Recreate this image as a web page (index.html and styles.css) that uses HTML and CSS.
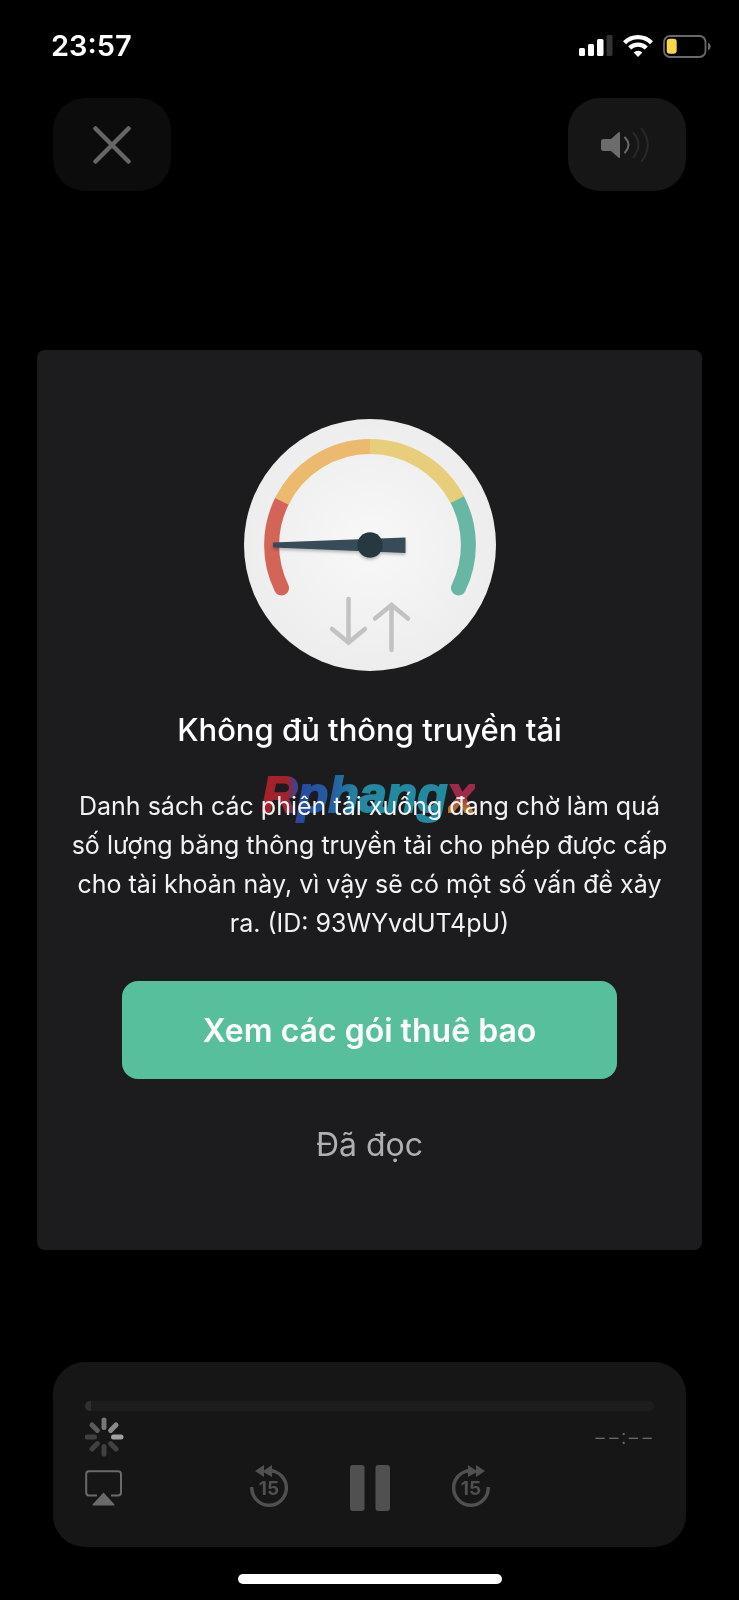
FILE: index.html
```html
<!DOCTYPE html>
<html lang="vi">
<head>
<meta charset="utf-8">
<meta name="viewport" content="width=device-width, initial-scale=1">
<title>Không đủ thông truyền tải</title>
<link rel="stylesheet" href="styles.css">
</head>
<body>
<header class="status">
  <time class="clock">23:57</time>
  <div class="status-icons">
    <svg width="34" height="22" viewBox="0 0 34 22" aria-hidden="true">
      <g fill="#fff"><rect x="0" y="13" width="6" height="8" rx="1.5"/><rect x="9" y="9" width="6" height="12" rx="1.5"/><rect x="18" y="4" width="6.5" height="17" rx="1.5"/></g>
      <rect x="27.500" y="0" width="6" height="21" rx="1.5" fill="#333"/>
    </svg>
    <svg width="30" height="22" viewBox="0 0 30 22" aria-hidden="true" fill="none" stroke="#fff" stroke-width="4.300">
      <path d="M1.500 7.800A19 19 0 0 1 28.500 7.800"/>
      <path d="M6.700 13A11.700 11.700 0 0 1 23.300 13"/>
      <path d="M15 22L10.600 17.600A6.300 6.300 0 0 1 19.400 17.600Z" fill="#fff" stroke="none"/>
    </svg>
    <svg width="48" height="23" viewBox="0 0 48 23" aria-hidden="true">
      <rect x="1" y="1" width="41.500" height="21" rx="6" fill="none" stroke="#6a6a6a" stroke-width="1.800"/>
      <rect x="3.700" y="3.700" width="10" height="15" rx="3" fill="#f8d64a"/>
      <path d="M45 7.500Q47.700 9 47.700 11.500T45 15.500Z" fill="#6a6a6a"/>
    </svg>
  </div>
</header>

<nav class="top-controls">
  <button class="pill pill-close" type="button" aria-label="Đóng">
    <svg width="38" height="38" viewBox="0 0 38 38" fill="none" stroke="#666" stroke-width="4.500" stroke-linecap="round"><path d="M2.500 2.500L35.500 35.500M35.500 2.500L2.500 35.500"/></svg>
  </button>
  <button class="pill" type="button" aria-label="Âm lượng">
    <svg width="54" height="38" viewBox="0 0 54 38" fill="none" stroke-linecap="round" stroke-width="2">
      <path d="M3.500 13H11L18.600 6.300Q20 5.300 20 7V31Q20 32.700 18.600 31.700L11 25H3.500Q1 25 1 22.500V15.500Q1 13 3.500 13Z" fill="#6c6c6c"/>
      <path d="M25 11.500Q32 19 25 26.500" stroke="#696969"/>
      <path d="M33.500 7Q43.500 19 33.500 31" stroke="#292929"/>
      <path d="M41.500 2.500Q54 19 41.500 35.500" stroke="#292929"/>
    </svg>
  </button>
</nav>

<main class="card">
  <svg class="gauge" width="252" height="252" viewBox="0 0 252 252" aria-hidden="true">
    <defs>
      <radialGradient id="dial"><stop offset="0" stop-color="#f8f8f8"/><stop offset="1" stop-color="#ededed"/></radialGradient>
      <filter id="shade" x="-20%" y="-50%" width="140%" height="220%"><feDropShadow dx="0" dy="2" stdDeviation="1.500" flood-opacity=".25"/></filter>
    </defs>
    <circle cx="126" cy="126" r="126" fill="url(#dial)"/>
    <g fill="none" stroke-width="15">
      <path d="M37.500 169A98.400 98.400 0 0 1 37.800 82.400" stroke="#d26558" stroke-linecap="round"/>
      <path d="M214.500 169A98.400 98.400 0 0 0 213.300 80.600" stroke="#6ab6a5" stroke-linecap="round"/>
      <path d="M37.800 82.400A98.400 98.400 0 0 1 126 27.600" stroke="#ebba6f"/>
      <path d="M126 27.600A98.400 98.400 0 0 1 213.300 80.600" stroke="#e8ce7a"/>
    </g>
    <g filter="url(#shade)">
      <path d="M29 123.500L161.500 118.500V134L29 128.500Z" fill="#384b59"/>
      <circle cx="126" cy="126" r="12.700" fill="#273741"/>
    </g>
    <g fill="none" stroke="#c2c2c2" stroke-width="4.500" stroke-linecap="round">
      <path d="M104.500 180V222.500M88 210L104.500 223.500L121 210M147.500 231V186M131 199.500L147.500 186L164 199.500"/>
    </g>
  </svg>
  <h1 class="title">Không đủ thông truyền tải</h1>
  <div class="message">
    <span class="watermark" aria-hidden="true"><span class="wm-main">Rphang</span><span class="wm-x">x</span></span>
    <p class="message-text">Danh sách các phiên tải xuống đang chờ làm quá số lượng băng thông truyền tải cho phép được cấp cho tài khoản này, vì vậy sẽ có một số vấn đề xảy ra. (ID: 93WYvdUT4pU)</p>
  </div>
  <button class="primary" type="button">Xem các gói thuê bao</button>
  <button class="dismiss" type="button">Đã đọc</button>
</main>

<section class="player" aria-label="Trình phát">
  <input class="seek" type="range" min="0" max="100" value="0" aria-label="Tiến trình">
  <div class="time-row">
    <svg width="40" height="40" viewBox="-19 -20 40 40" fill="none" stroke-width="5" stroke-linecap="round" aria-hidden="true">
      <path d="M0 -9.500V-17" stroke="#777"/>
      <path d="M6.600 -6.600L12 -12" stroke="#8a8a8a"/>
      <path d="M9.500 0H17" stroke="#a0a0a0"/>
      <path d="M6.600 6.600L12 12M0 9.500V17M-6.600 6.600L-12 12M-9.500 0H-17" stroke="#404040"/>
      <path d="M-6.600 -6.600L-12 -12" stroke="#5b5b5b"/>
    </svg>
    <span class="remaining">−−:−−</span>
  </div>
  <div class="controls">
    <button class="icon-btn airplay" type="button" aria-label="AirPlay">
      <svg width="38" height="36" viewBox="0 0 38 36"><path d="M12 25.500H4Q1.200 25.500 1.200 22.500V4Q1.200 1.200 4 1.200H33Q36 1.200 36 4V22.500Q36 25.500 33 25.500H26" fill="none" stroke="#6a6a6a" stroke-width="2"/><path d="M18.500 22.500L29.500 34.500Q29.500 35.500 28.500 35.500H8.500Q7.500 35.500 7.500 34.500Z" fill="#6a6a6a"/></svg>
    </button>
    <div class="transport">
      <button class="icon-btn" type="button" aria-label="Lùi 15 giây">
        <svg width="38" height="42" viewBox="0 0 38 42"><path d="M1.800 22A17.300 17.300 0 1 0 19 5.600" fill="none" stroke="#505050" stroke-width="3.400"/><path d="M5 6L14 0V5.500L22 0V4L26 5.500L22 8.500V12L14 7.500V12Z" fill="#505050"/><text class="skip-label" x="19" y="30">15</text></svg>
      </button>
      <button class="icon-btn" type="button" aria-label="Tạm dừng">
        <svg width="40" height="46" viewBox="0 0 40 46" fill="#505050"><rect width="14.500" height="46" rx="3"/><rect x="25.500" width="14.500" height="46" rx="3"/></svg>
      </button>
      <button class="icon-btn" type="button" aria-label="Tiến 15 giây">
        <svg width="38" height="42" viewBox="0 0 38 42"><path d="M36.200 22A17.300 17.300 0 1 1 19 5.600" fill="none" stroke="#505050" stroke-width="3.400"/><path d="M33 6L24 0V5.500L16 0V4L12 5.500L16 8.500V12L24 7.500V12Z" fill="#505050"/><text class="skip-label" x="19" y="30">15</text></svg>
      </button>
    </div>
  </div>
</section>
<div class="home-bar"></div>
</body>
</html>
```
FILE: styles.css
```css
* { box-sizing: border-box; }
body {
  margin: 0;
  min-height: 100vh;
  background: #000;
  color: #fff;
  font-family: Inter, "Noto Sans", sans-serif;
}
button {
  border: 0;
  padding: 0;
  background: none;
  color: inherit;
  font-family: inherit;
  cursor: pointer;
}
svg { display: block; }

.status {
  display: flex;
  justify-content: space-between;
  padding: 28px 28px 34px 51px;
}
.clock { font-size: 29px; line-height: 36px; font-weight: 600; }
.status-icons { display: flex; align-items: center; gap: 10px; }

.top-controls {
  display: flex;
  justify-content: space-between;
  padding: 0 53px;
}
.pill {
  display: flex;
  align-items: center;
  justify-content: center;
  width: 118px;
  height: 93px;
  border-radius: 32px;
  background: #161616;
}
.pill-close { background: #0c0c0c; }

.card {
  display: flex;
  flex-direction: column;
  align-items: center;
  margin: 159px 37px 0;
  padding: 69px 28px 85px;
  border-radius: 8px;
  background: #1c1c1e;
  text-align: center;
}
.title {
  margin: 39px 0 0;
  font-size: 31px;
  line-height: 40px;
  font-weight: 500;
}
.message { position: relative; margin-top: 37px; }
.message-text {
  margin: 0;
  color: #f2f2f2;
  font-size: 25px;
  line-height: 39px;
}
.watermark {
  position: absolute;
  top: -20px;
  left: 50%;
  margin-left: -108px;
  font: italic 700 50px/56px "Liberation Sans", Arial, sans-serif;
  opacity: .8;
  mix-blend-mode: screen;
  white-space: nowrap;
}
.wm-main, .wm-x {
  color: transparent;
  background-clip: text;
  -webkit-background-clip: text;
  -webkit-text-stroke: 2px transparent;
}
.wm-main { background-image: linear-gradient(90deg, #c00810 13%, #0d3fc0 20%, #0860b8 38%, #0898b8 52%, #0898b8); }
.wm-x { background-image: linear-gradient(#b8123c 50%, #d98c10 80%); }

.primary {
  width: 100%;
  max-width: 495px;
  height: 98px;
  margin-top: 38px;
  border-radius: 16px;
  background: #57bf9c;
  font-size: 32px;
  font-weight: 600;
}
.dismiss {
  margin-top: 46px;
  color: #b0b0b0;
  font-size: 32px;
  line-height: 40px;
}

.player {
  margin: 112px 53px 0;
  padding: 39px 32px 36px;
  border-radius: 32px;
  background: #161616;
}
.seek {
  appearance: none;
  display: block;
  width: 100%;
  height: 10px;
  margin: 0;
  border-radius: 5px;
  background: linear-gradient(90deg, #303030 6px, #1d1d1d 6px);
}
.seek::-webkit-slider-thumb { appearance: none; width: 6px; height: 10px; background: transparent; }
.time-row {
  display: flex;
  align-items: center;
  justify-content: space-between;
  margin-top: 6px;
}
.remaining { color: #6a6a6a; font-size: 21px; line-height: 24px; font-weight: 300; }
.controls {
  display: grid;
  grid-template-columns: 1fr auto 1fr;
  margin-top: 8px;
}
.airplay { justify-self: start; align-self: center; }
.transport { display: flex; align-items: flex-start; gap: 62px; }
.skip-label { fill: #505050; font-size: 19px; font-weight: 700; text-anchor: middle; }

.home-bar {
  width: 264px;
  height: 10px;
  margin: 27px auto 0;
  border-radius: 5px;
  background: #fff;
}
```
